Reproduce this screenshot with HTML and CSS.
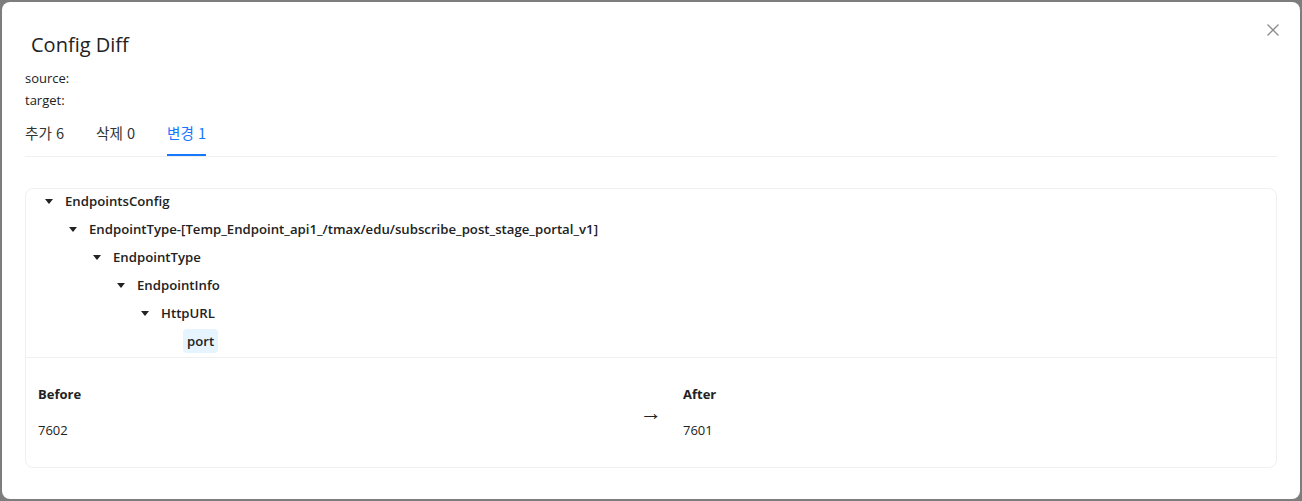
FILE: index.html
```html
<!DOCTYPE html>
<html lang="ko">
<head>
<meta charset="utf-8">
<title>Config Diff</title>
<link rel="stylesheet" href="styles.css">
</head>
<body>
<div class="backdrop">
  <div class="modal">
    <button class="close" aria-label="close">
      <svg width="14" height="14" viewBox="0 0 14 14"><path d="M1.5 1.5 L12.5 12.5 M12.5 1.5 L1.5 12.5" stroke="#8c8c8c" stroke-width="1.3" fill="none"/></svg>
    </button>
    <div class="title">Config Diff</div>
    <div class="meta">source:</div>
    <div class="meta">target:</div>
    <div class="tabs">
      <div class="tab">추가 6</div>
      <div class="tab">삭제 0</div>
      <div class="tab active">변경 1</div>
    </div>
    <div class="card">
      <div class="tree">
        <div class="node lv0"><span class="switcher"><span class="caret"></span></span><span class="label">EndpointsConfig</span></div>
        <div class="node lv1"><span class="switcher"><span class="caret"></span></span><span class="label">EndpointType-[Temp_Endpoint_api1_/tmax/edu/subscribe_post_stage_portal_v1]</span></div>
        <div class="node lv2"><span class="switcher"><span class="caret"></span></span><span class="label">EndpointType</span></div>
        <div class="node lv3"><span class="switcher"><span class="caret"></span></span><span class="label">EndpointInfo</span></div>
        <div class="node lv4"><span class="switcher"><span class="caret"></span></span><span class="label">HttpURL</span></div>
        <div class="node lv5"><span class="switcher"></span><span class="label selected">port</span></div>
      </div>
      <div class="compare">
        <div class="col">
          <div class="col-head">Before</div>
          <div class="col-val">7602</div>
        </div>
        <div class="arrow">→</div>
        <div class="col">
          <div class="col-head">After</div>
          <div class="col-val">7601</div>
        </div>
      </div>
    </div>
  </div>
</div>
</body>
</html>
```
FILE: styles.css
```css
* { box-sizing: border-box; }
html, body { margin: 0; padding: 0; }
body {
  width: 1302px;
  height: 501px;
  overflow: hidden;
  background: #7d7d7d;
  font-family: "Open Sans", "Noto Sans CJK KR", sans-serif;
  color: #222;
}
.backdrop {
  width: 1302px;
  height: 501px;
  padding: 2px;
}
.modal {
  position: relative;
  background: #fff;
  border-radius: 8px;
  width: 1298px;
  height: 497px;
  padding: 0 23px;
}
.close {
  position: absolute;
  top: 20px;
  right: 19px;
  width: 16px;
  height: 16px;
  border: 0;
  background: none;
  padding: 1px;
  cursor: pointer;
}
.title {
  padding: 29px 0 0 6px;
  height: 65px;
  font-size: 20px;
  line-height: 28px;
  color: #222;
}
.meta {
  font-size: 13px;
  line-height: 22px;
  color: #222;
}
.tabs {
  display: flex;
  gap: 32px;
  border-bottom: 1px solid #f0f0f0;
  height: 46px;
}
.tab {
  font-size: 14.6px;
  line-height: 22px;
  padding: 11px 0 11px;
  color: #333;
  font-family: "Noto Sans CJK KR", "Open Sans", sans-serif;
}
.tab.active {
  color: #1677ff;
  border-bottom: 2px solid #1677ff;
}
.card {
  margin-top: 31px;
  border: 1px solid #f0f0f0;
  border-radius: 8px;
  height: 280px;
}
.tree {
  padding-left: 11px;
}
.node {
  display: flex;
  align-items: center;
  height: 28px;
  padding-bottom: 4px;
  font-size: 13.2px;
  font-weight: 600;
  color: #222;
}
.lv1 { padding-left: 24px; }
.lv2 { padding-left: 48px; }
.lv3 { padding-left: 72px; }
.lv4 { padding-left: 96px; }
.lv5 { padding-left: 120px; }
.switcher {
  width: 24px;
  height: 24px;
  display: flex;
  align-items: center;
  justify-content: center;
  flex: none;
}
.caret {
  width: 0;
  height: 0;
  border-left: 4px solid transparent;
  border-right: 4px solid transparent;
  border-top: 5px solid #222;
}
.label {
  line-height: 24px;
  padding: 0 4px;
  border-radius: 4px;
}
.label.selected {
  background: #e6f4ff;
  margin-left: 2px;
}
.compare {
  border-top: 1px solid #f0f0f0;
  display: flex;
  align-items: center;
  gap: 24px;
  padding: 25px 12px 23px;
}
.col { flex: 1; }
.col-head {
  font-size: 13px;
  font-weight: 700;
  line-height: 22px;
  margin-bottom: 14px;
}
.col-val {
  font-size: 13px;
  line-height: 22px;
}
.arrow {
  width: 16px;
  font-size: 22px;
  line-height: 22px;
  font-family: "Liberation Sans", sans-serif;
  padding-top: 1px;
  display: flex;
  justify-content: center;
}
```
